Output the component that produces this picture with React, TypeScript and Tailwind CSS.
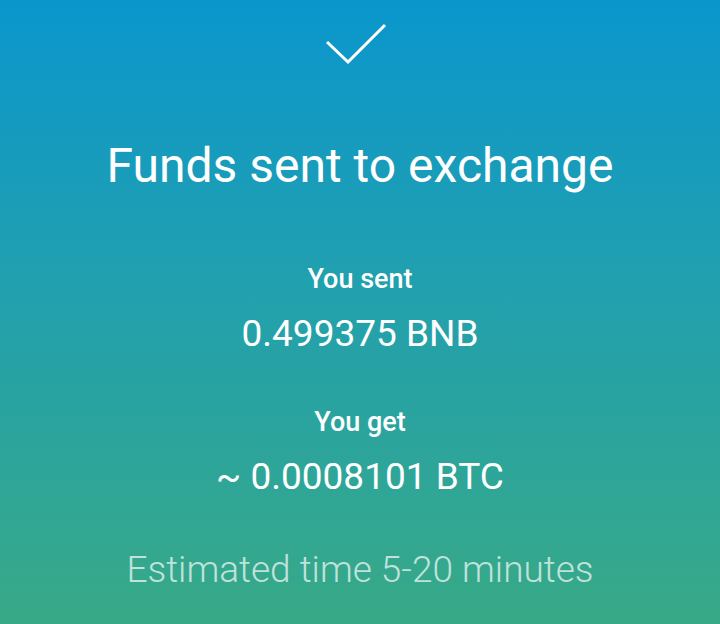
export default function App() {
  return (
    <div
      className="w-[720px] h-[624px] overflow-hidden flex flex-col items-center text-white bg-gradient-to-b from-[#0a96cd] to-[#38a986]"
      style={{ fontFamily: 'Roboto, "Noto Sans", sans-serif' }}
    >
      {/* success check */}
      <svg className="mt-[22px] w-[70px] h-[42px]" viewBox="0 0 70 42" fill="none">
        <path d="M2 20 L23 40 L60 3" stroke="white" strokeWidth="3" />
      </svg>

      <h1 className="mt-[78px] text-[48px] leading-none font-normal">Funds sent to exchange</h1>

      <div className="mt-[76px] text-[27px] leading-none font-medium">You sent</div>
      <div className="mt-[22px] text-[37px] leading-none">0.499375 BNB</div>

      <div className="mt-[57px] text-[27px] leading-none font-medium">You get</div>
      <div className="mt-[22px] text-[37px] leading-none">~ 0.0008101 BTC</div>

      <div className="mt-[56px] text-[37px] leading-none font-light text-white/70">
        Estimated time 5-20 minutes
      </div>
    </div>
  );
}
